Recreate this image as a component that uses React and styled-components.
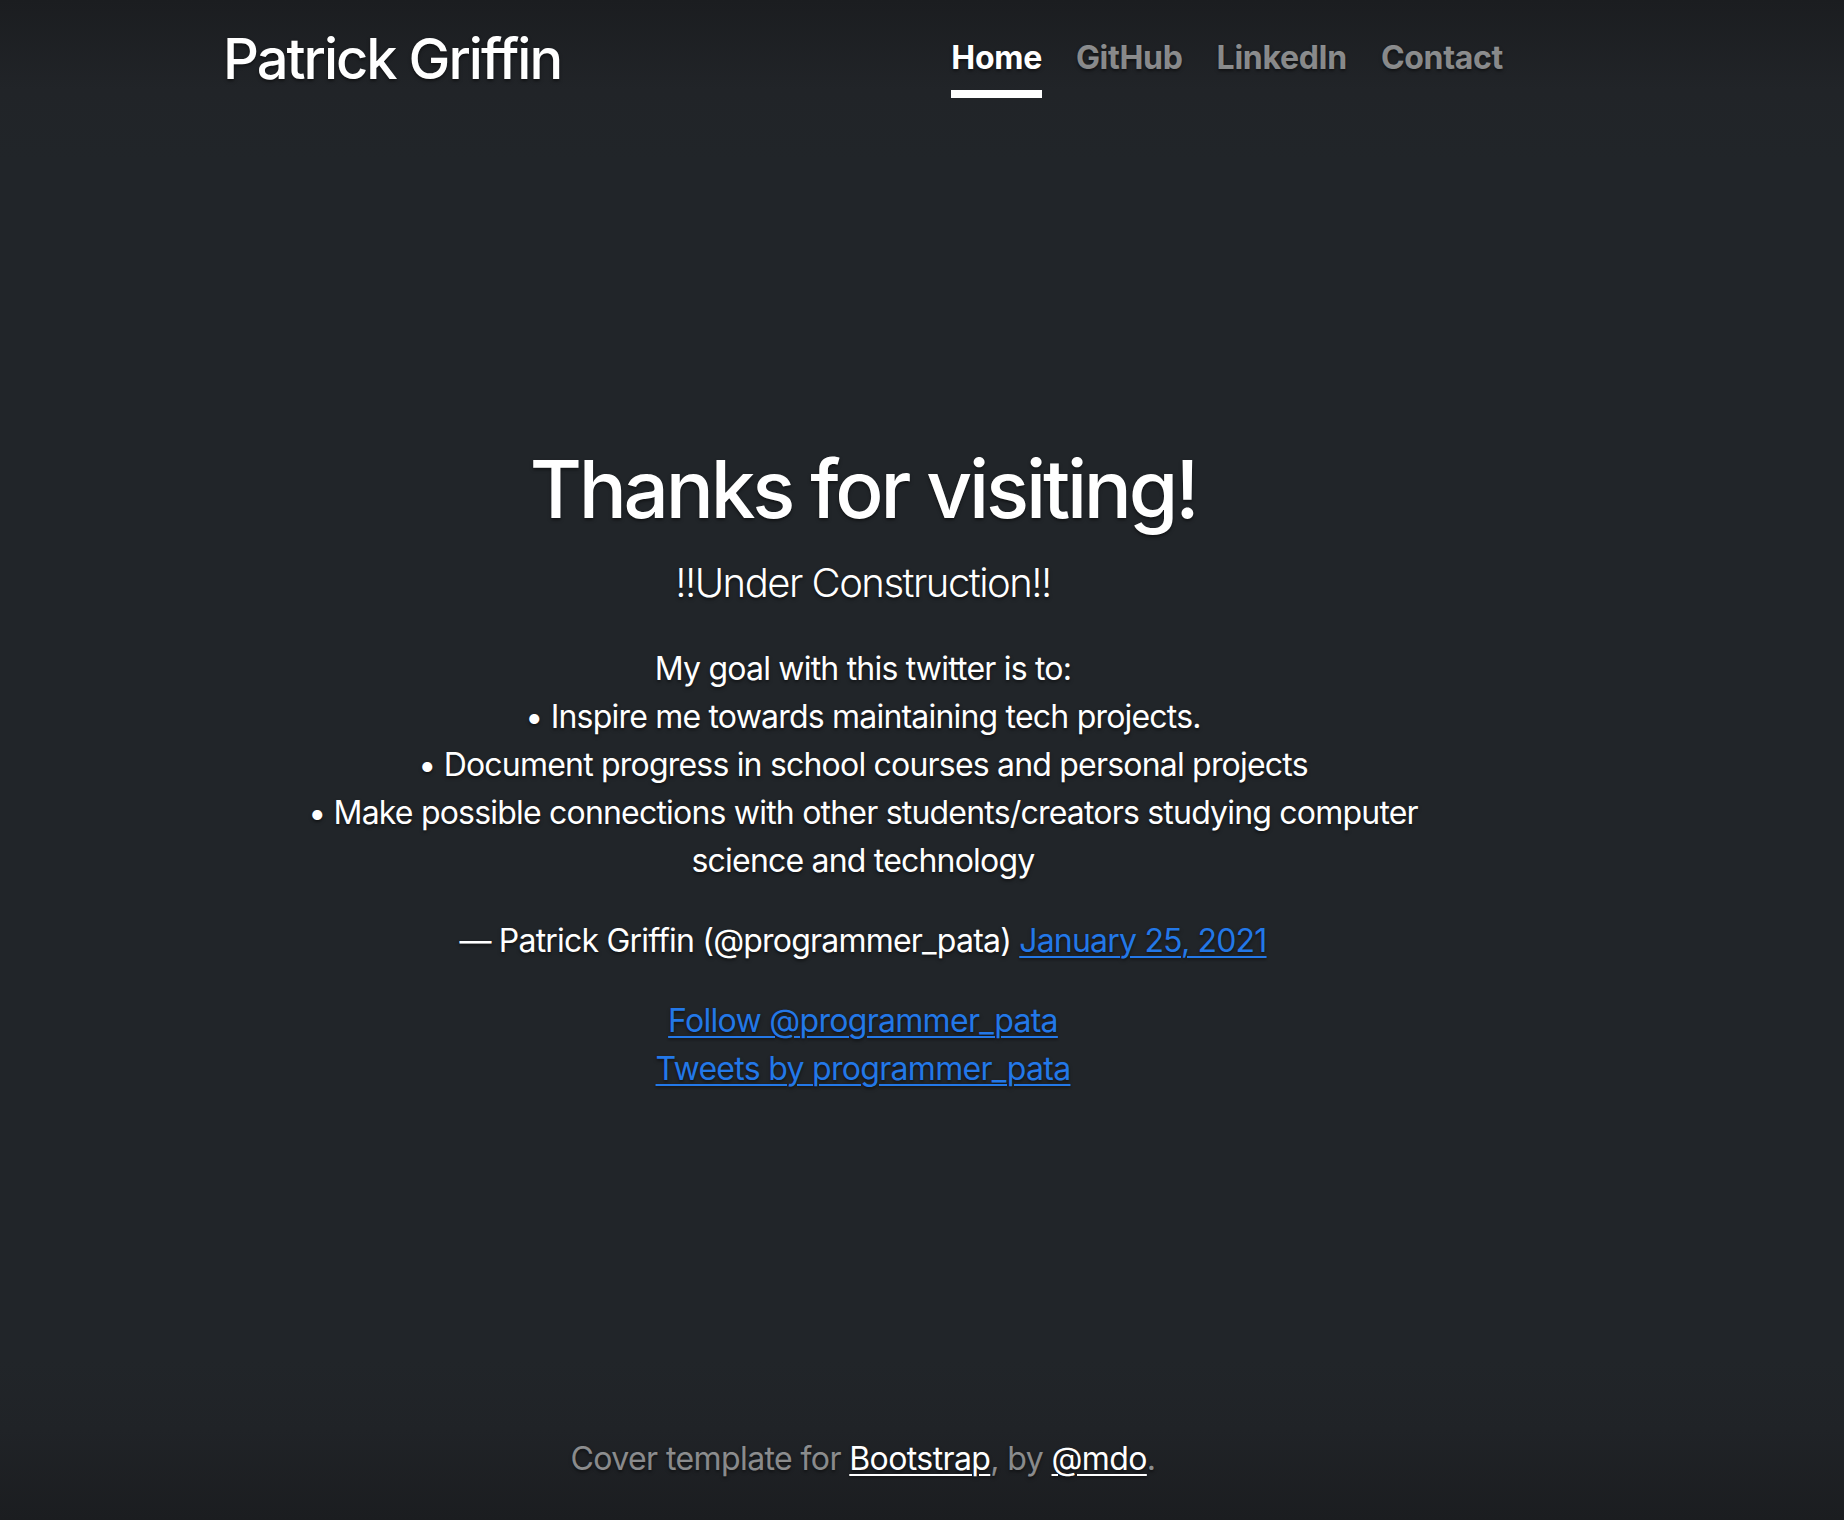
import React from 'react'
import styled, { createGlobalStyle } from 'styled-components'

const GlobalStyle = createGlobalStyle`
  html, body {
    margin: 0;
    padding: 0;
  }
  body {
    font-family: Inter, "Noto Sans", "Liberation Sans", sans-serif;
    color: #fff;
    background: #212529;
  }
`

const Page = styled.div`
  min-height: 100vh;
  display: flex;
  justify-content: center;
  padding-right: 118px;
  background: linear-gradient(
    to bottom,
    #1b1d20 0,
    #212428 90px,
    #212529 160px,
    #212529 calc(100% - 160px),
    #202327 calc(100% - 90px),
    #1b1d20 100%
  );
  text-shadow: 0 1.6px 3.2px rgba(0, 0, 0, 0.5);
`

const Cover = styled.div`
  box-sizing: border-box;
  width: 100%;
  max-width: 1344px;
  min-height: 100vh;
  padding: 26px 32px 5px;
  display: flex;
  flex-direction: column;
`

const Masthead = styled.header`
  display: flex;
  justify-content: space-between;
  align-items: flex-start;
  margin-bottom: auto;
`

const Brand = styled.h3`
  margin: 0;
  font-size: 56px;
  font-weight: 500;
  line-height: 1.2;
  letter-spacing: -2px;
`

const Nav = styled.nav`
  display: flex;
  gap: 34px;
`

const NavLink = styled.a`
  display: block;
  padding: 8px 0;
  font-size: 32px;
  line-height: 48px;
  font-weight: 700;
  letter-spacing: -0.3px;
  text-decoration: none;
  color: ${({ $active }) => ($active ? '#fff' : 'rgba(255, 255, 255, 0.5)')};
  border-bottom: 8px solid ${({ $active }) => ($active ? '#fff' : 'transparent')};
`

const Inner = styled.main`
  margin: auto 0;
  text-align: center;
`

const Heading = styled.h1`
  margin: 0 0 16px;
  font-size: 80px;
  font-weight: 500;
  line-height: 1.2;
  letter-spacing: -3.2px;
`

const Lead = styled.p`
  margin: 0 0 32px;
  font-size: 40px;
  font-weight: 300;
  line-height: 1.5;
  letter-spacing: -1.5px;
`

const Tweet = styled.blockquote`
  margin: 0 64px 32px;
  font-size: 32px;
  line-height: 48px;
  letter-spacing: -0.8px;

  p {
    margin: 0 0 32px;
  }
`

const BlueLink = styled.a`
  color: #2378e8;
  text-decoration: underline;
  text-underline-offset: 4px;
  text-decoration-thickness: 2px;
`

const Embeds = styled.div`
  display: flex;
  flex-direction: column;
  align-items: center;
  font-size: 32px;
  line-height: 48px;
  letter-spacing: -0.7px;
`

const Footer = styled.footer`
  margin-top: auto;
  text-align: center;
  color: rgba(255, 255, 255, 0.5);
  font-size: 32px;
  line-height: 48px;
  letter-spacing: -0.6px;

  p {
    margin: 0 0 32px;
  }
`

const WhiteLink = styled.a`
  color: #fff;
  text-decoration: underline;
  text-underline-offset: 4px;
  text-decoration-thickness: 2px;
`

const navItems = ['Home', 'GitHub', 'LinkedIn', 'Contact']

export default function App() {
  return (
    <>
      <GlobalStyle />
      <Page>
        <Cover>
          <Masthead>
            <Brand>Patrick Griffin</Brand>
            <Nav>
              {navItems.map((item, i) => (
                <NavLink key={item} href="#" $active={i === 0}>
                  {item}
                </NavLink>
              ))}
            </Nav>
          </Masthead>

          <Inner>
            <Heading>Thanks for visiting!</Heading>
            <Lead>!!Under Construction!!</Lead>
            <Tweet>
              <p>
                My goal with this twitter is to:
                <br />• Inspire me towards maintaining tech projects.
                <br />• Document progress in school courses and personal projects
                <br />• Make possible connections with other students/creators studying computer
                science and technology
              </p>
              — Patrick Griffin (@programmer_pata){' '}
              <BlueLink href="#">January 25, 2021</BlueLink>
            </Tweet>
            <Embeds>
              <BlueLink href="#">Follow @programmer_pata</BlueLink>
              <BlueLink href="#">Tweets by programmer_pata</BlueLink>
            </Embeds>
          </Inner>

          <Footer>
            <p>
              Cover template for <WhiteLink href="#">Bootstrap</WhiteLink>, by{' '}
              <WhiteLink href="#">@mdo</WhiteLink>.
            </p>
          </Footer>
        </Cover>
      </Page>
    </>
  )
}
